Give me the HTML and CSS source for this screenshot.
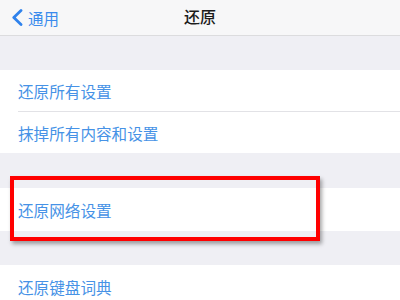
FILE: index.html
```html
<!DOCTYPE html>
<html lang="zh-CN">
<head>
<meta charset="utf-8">
<link rel="stylesheet" href="styles.css">
</head>
<body>
<div class="screen">
  <header class="nav">
    <div class="back">
      <svg class="chev" width="12" height="17" viewBox="0 0 12 17"><path d="M10 1.5 L2.8 8.5 L10 15.5" fill="none" stroke="#2f82ec" stroke-width="2.8" stroke-linecap="round" stroke-linejoin="round"/></svg>
      <span>通用</span>
    </div>
    <div class="title">还原</div>
  </header>
  <div class="spacer top"></div>
  <section class="group">
    <div class="row sep">还原所有设置</div>
    <div class="row">抹掉所有内容和设置</div>
  </section>
  <div class="spacer"></div>
  <section class="group">
    <div class="row tall">还原网络设置</div>
  </section>
  <div class="spacer short"></div>
  <section class="group">
    <div class="row tall">还原键盘词典</div>
  </section>
  <div class="highlight"></div>
</div>
</body>
</html>
```
FILE: styles.css
```css
html, body {
  margin: 0;
  padding: 0;
  background: #efeff4;
  font-family: "Noto Sans CJK SC", "Noto Sans", sans-serif;
  overflow: hidden;
}
.screen {
  position: relative;
  width: 400px;
  height: 300px;
  overflow: hidden;
}
.nav {
  height: 35px;
  background: #f7f7f8;
  border-bottom: 1px solid #dcdcde;
  display: flex;
  align-items: center;
  position: relative;
}
.back {
  display: flex;
  align-items: center;
  gap: 5px;
  padding-left: 11px;
  color: #3a8bec;
  font-size: 15.5px;
  line-height: 20px;
}
.chev { display: block; margin-top: -1px; }
.title {
  position: absolute;
  left: 0;
  right: 0;
  text-align: center;
  font-size: 16px;
  font-weight: 500;
  color: #1c1c1c;
  line-height: 20px;
  top: 6px;
}
.spacer { height: 35px; }
.spacer.top { height: 34px; }
.spacer.short { height: 34px; }
.group { background: #ffffff; }
.row {
  margin-left: 18px;
  height: 41px;
  display: flex;
  align-items: center;
  color: #4692e6;
  font-size: 15.6px;
  line-height: 20px;
}
.row.sep { border-bottom: 1px solid #e2e2e6; }
.row.tall { height: 43px; }
.highlight {
  position: absolute;
  left: 10px;
  top: 176px;
  width: 302px;
  height: 57px;
  border: 4px solid #ff0000;
  box-shadow: 2px 3px 4px rgba(0, 0, 0, 0.35);
}
```
